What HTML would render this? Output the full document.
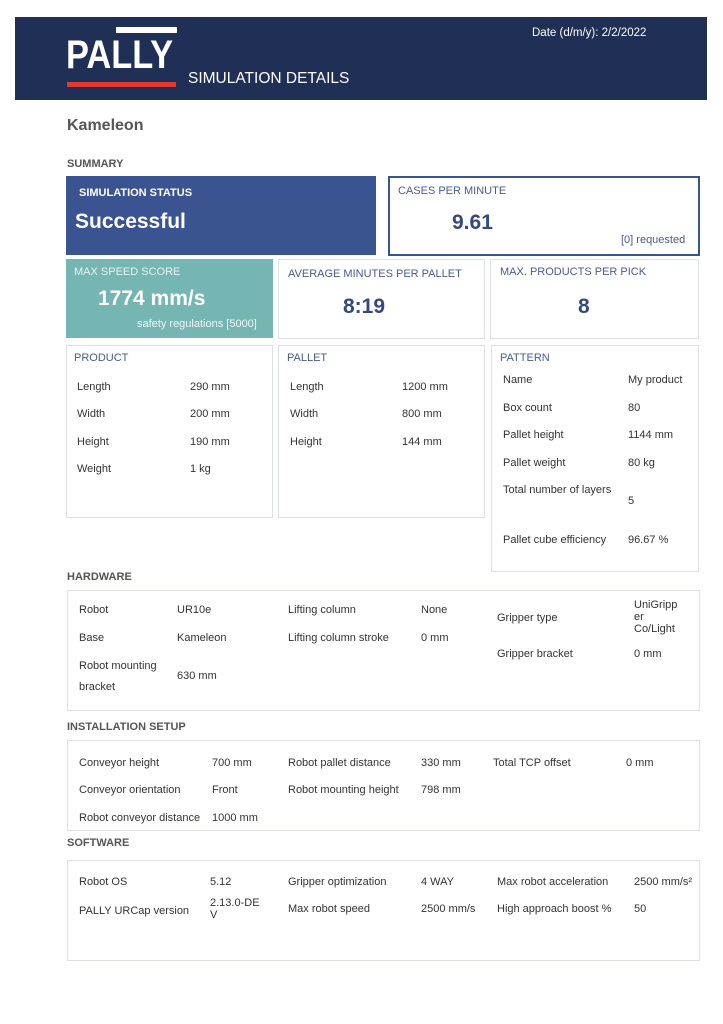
<!DOCTYPE html>
<html><head><meta charset="utf-8"><style>
*{margin:0;padding:0;box-sizing:border-box}
body{width:723px;height:1024px;background:#fff;position:relative;font-family:"Liberation Sans",sans-serif;color:#333;overflow:hidden}
.a{position:absolute;white-space:nowrap;font-size:11px;line-height:14px}
.b{position:absolute;border:1px solid #dde1e6}
.h{font-weight:bold;color:#555;font-size:11px}
.t{color:#4a5b8c;font-size:11px}
.big{font-weight:bold;color:#34497f;font-size:21px;line-height:24px}
</style></head><body>
<div style="position:absolute;left:15px;top:17px;width:692px;height:83px;background:#202f55"></div>
<div style="position:absolute;left:116px;top:27px;width:61px;height:6px;background:#fff"></div>
<div class="a" style="left:66px;top:36px;font-size:40px;line-height:38px;color:#fff;font-weight:bold;transform:scaleX(0.86);transform-origin:0 0">PALLY</div>
<div style="position:absolute;left:67px;top:82px;width:109px;height:5px;background:#e0392f"></div>
<div class="a" style="left:188px;top:70px;font-size:15.5px;line-height:18px;color:#fff">SIMULATION DETAILS</div>
<div class="a" style="left:532px;top:26px;color:#fff;font-size:11.5px">Date (d/m/y): 2/2/2022</div>

<div class="a" style="left:67px;top:117px;font-size:16px;line-height:18px;font-weight:bold;color:#555">Kameleon</div>
<div class="a h" style="left:67px;top:157px">SUMMARY</div>

<div style="position:absolute;left:66px;top:176px;width:310px;height:79px;background:#3a5491"></div>
<div class="a" style="left:79px;top:186px;color:#fff;font-weight:bold">SIMULATION STATUS</div>
<div class="a" style="left:75px;top:210px;color:#fff;font-weight:bold;font-size:21px;line-height:24px">Successful</div>
<div style="position:absolute;left:388px;top:176px;width:312px;height:80px;border:2px solid #3a5491"></div>
<div class="a t" style="left:398px;top:184px">CASES PER MINUTE</div>
<div class="a big" style="left:452px;top:211px">9.61</div>
<div class="a t" style="left:621px;top:233px">[0] requested</div>

<div style="position:absolute;left:66px;top:259px;width:207px;height:79px;background:#75b5b2"></div>
<div class="a" style="left:74px;top:265px;color:#e8f4f3">MAX SPEED SCORE</div>
<div class="a" style="left:98px;top:287px;color:#fff;font-weight:bold;font-size:21px;line-height:24px">1774 mm/s</div>
<div class="a" style="left:137px;top:317px;color:#f0f8f8">safety regulations [5000]</div>
<div class="b" style="left:278px;top:259px;width:207px;height:80px"></div>
<div class="a t" style="left:288px;top:267px">AVERAGE MINUTES PER PALLET</div>
<div class="a big" style="left:343px;top:295px">8:19</div>
<div class="b" style="left:490px;top:259px;width:209px;height:80px"></div>
<div class="a t" style="left:500px;top:265px">MAX. PRODUCTS PER PICK</div>
<div class="a big" style="left:578px;top:295px">8</div>

<div class="b" style="left:66px;top:345px;width:207px;height:173px"></div>
<div class="a t" style="left:74px;top:351px">PRODUCT</div>
<div class="a" style="left:77px;top:380px">Length</div><div class="a" style="left:190px;top:380px">290 mm</div>
<div class="a" style="left:77px;top:407px">Width</div><div class="a" style="left:190px;top:407px">200 mm</div>
<div class="a" style="left:77px;top:435px">Height</div><div class="a" style="left:190px;top:435px">190 mm</div>
<div class="a" style="left:77px;top:462px">Weight</div><div class="a" style="left:190px;top:462px">1 kg</div>
<div class="b" style="left:278px;top:345px;width:207px;height:173px"></div>
<div class="a t" style="left:287px;top:351px">PALLET</div>
<div class="a" style="left:290px;top:380px">Length</div><div class="a" style="left:402px;top:380px">1200 mm</div>
<div class="a" style="left:290px;top:407px">Width</div><div class="a" style="left:402px;top:407px">800 mm</div>
<div class="a" style="left:290px;top:435px">Height</div><div class="a" style="left:402px;top:435px">144 mm</div>
<div class="b" style="left:491px;top:345px;width:208px;height:227px"></div>
<div class="a t" style="left:500px;top:351px">PATTERN</div>
<div class="a" style="left:503px;top:373px">Name</div><div class="a" style="left:628px;top:373px">My product</div>
<div class="a" style="left:503px;top:401px">Box count</div><div class="a" style="left:628px;top:401px">80</div>
<div class="a" style="left:503px;top:428px">Pallet height</div><div class="a" style="left:628px;top:428px">1144 mm</div>
<div class="a" style="left:503px;top:456px">Pallet weight</div><div class="a" style="left:628px;top:456px">80 kg</div>
<div class="a" style="left:503px;top:483px">Total number of layers</div><div class="a" style="left:628px;top:494px">5</div>
<div class="a" style="left:503px;top:533px">Pallet cube efficiency</div><div class="a" style="left:628px;top:533px">96.67 %</div>

<div class="a h" style="left:67px;top:570px">HARDWARE</div>
<div class="b" style="left:67px;top:590px;width:633px;height:121px"></div>
<div class="a" style="left:79px;top:603px">Robot</div><div class="a" style="left:177px;top:603px">UR10e</div>
<div class="a" style="left:79px;top:631px">Base</div><div class="a" style="left:177px;top:631px">Kameleon</div>
<div class="a" style="left:79px;top:659px">Robot mounting</div><div class="a" style="left:79px;top:680px">bracket</div><div class="a" style="left:177px;top:669px">630 mm</div>
<div class="a" style="left:288px;top:603px">Lifting column</div><div class="a" style="left:421px;top:603px">None</div>
<div class="a" style="left:288px;top:631px">Lifting column stroke</div><div class="a" style="left:421px;top:631px">0 mm</div>
<div class="a" style="left:497px;top:611px">Gripper type</div>
<div class="a" style="left:634px;top:599px;line-height:12px">UniGripp<br>er<br>Co/Light</div>
<div class="a" style="left:497px;top:647px">Gripper bracket</div><div class="a" style="left:634px;top:647px">0 mm</div>

<div class="a h" style="left:67px;top:720px">INSTALLATION SETUP</div>
<div class="b" style="left:67px;top:740px;width:633px;height:91px"></div>
<div class="a" style="left:79px;top:756px">Conveyor height</div><div class="a" style="left:212px;top:756px">700 mm</div>
<div class="a" style="left:79px;top:783px">Conveyor orientation</div><div class="a" style="left:212px;top:783px">Front</div>
<div class="a" style="left:79px;top:811px">Robot conveyor distance</div><div class="a" style="left:212px;top:811px">1000 mm</div>
<div class="a" style="left:288px;top:756px">Robot pallet distance</div><div class="a" style="left:421px;top:756px">330 mm</div>
<div class="a" style="left:288px;top:783px">Robot mounting height</div><div class="a" style="left:421px;top:783px">798 mm</div>
<div class="a" style="left:493px;top:756px">Total TCP offset</div><div class="a" style="left:626px;top:756px">0 mm</div>

<div class="a h" style="left:67px;top:836px">SOFTWARE</div>
<div class="b" style="left:67px;top:860px;width:633px;height:101px"></div>
<div class="a" style="left:79px;top:875px">Robot OS</div><div class="a" style="left:210px;top:875px">5.12</div>
<div class="a" style="left:79px;top:904px">PALLY URCap version</div><div class="a" style="left:210px;top:897px;line-height:12px">2.13.0-DE<br>V</div>
<div class="a" style="left:288px;top:875px">Gripper optimization</div><div class="a" style="left:421px;top:875px">4 WAY</div>
<div class="a" style="left:288px;top:902px">Max robot speed</div><div class="a" style="left:421px;top:902px">2500 mm/s</div>
<div class="a" style="left:497px;top:875px">Max robot acceleration</div><div class="a" style="left:634px;top:875px">2500 mm/s²</div>
<div class="a" style="left:497px;top:902px">High approach boost %</div><div class="a" style="left:634px;top:902px">50</div>
</body></html>
